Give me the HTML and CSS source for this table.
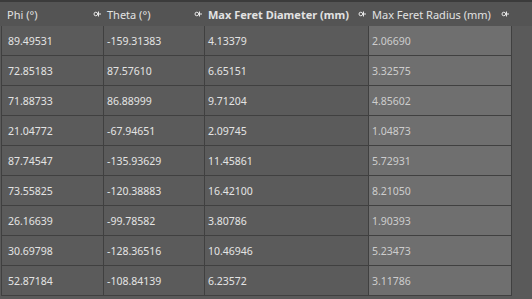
FILE: index.html
```html
<!DOCTYPE html>
<html>
<head>
<meta charset="utf-8">
<link rel="stylesheet" href="styles.css">
</head>
<body>
<div class="grid">
  <div class="topstrip"></div>
  <div class="hcell c1"><span>Phi (°)</span><svg class="pin" viewBox="0 0 8 8" width="8" height="8"><circle cx="2.8" cy="4" r="1.8"/><path d="M4.5 4H5.5M5.5 1.5V6.5M6 4H8"/></svg></div>
  <div class="hcell c2"><span>Theta (°)</span><svg class="pin" viewBox="0 0 8 8" width="8" height="8"><circle cx="2.8" cy="4" r="1.8"/><path d="M4.5 4H5.5M5.5 1.5V6.5M6 4H8"/></svg></div>
  <div class="hcell c3 bold"><span>Max Feret Diameter (mm)</span><svg class="pin" viewBox="0 0 8 8" width="8" height="8"><circle cx="2.8" cy="4" r="1.8"/><path d="M4.5 4H5.5M5.5 1.5V6.5M6 4H8"/></svg></div>
  <div class="hcell c4"><span>Max Feret Radius (mm)</span><svg class="pin" viewBox="0 0 8 8" width="8" height="8"><circle cx="2.8" cy="4" r="1.8"/><path d="M4.5 4H5.5M5.5 1.5V6.5M6 4H8"/></svg></div>
  <div class="hcell c5"></div>

  <div class="cell c1">89.49531</div><div class="cell c2">-159.31383</div><div class="cell c3">4.13379</div><div class="cell c4">2.06690</div><div class="cell c5"></div>
  <div class="cell c1">72.85183</div><div class="cell c2">87.57610</div><div class="cell c3">6.65151</div><div class="cell c4">3.32575</div><div class="cell c5"></div>
  <div class="cell c1">71.88733</div><div class="cell c2">86.88999</div><div class="cell c3">9.71204</div><div class="cell c4">4.85602</div><div class="cell c5"></div>
  <div class="cell c1">21.04772</div><div class="cell c2">-67.94651</div><div class="cell c3">2.09745</div><div class="cell c4">1.04873</div><div class="cell c5"></div>
  <div class="cell c1">87.74547</div><div class="cell c2">-135.93629</div><div class="cell c3">11.45861</div><div class="cell c4">5.72931</div><div class="cell c5"></div>
  <div class="cell c1">73.55825</div><div class="cell c2">-120.38883</div><div class="cell c3">16.42100</div><div class="cell c4">8.21050</div><div class="cell c5"></div>
  <div class="cell c1">26.16639</div><div class="cell c2">-99.78582</div><div class="cell c3">3.80786</div><div class="cell c4">1.90393</div><div class="cell c5"></div>
  <div class="cell c1">30.69798</div><div class="cell c2">-128.36516</div><div class="cell c3">10.46946</div><div class="cell c4">5.23473</div><div class="cell c5"></div>
  <div class="cell c1">52.87184</div><div class="cell c2">-108.84139</div><div class="cell c3">6.23572</div><div class="cell c4">3.11786</div><div class="cell c5"></div>
</div>
</body>
</html>
```
FILE: styles.css
```css
html, body {
  margin: 0;
  padding: 0;
  background: #5a5a5a;
  width: 532px;
  height: 299px;
  overflow: hidden;
}
.grid {
  display: grid;
  grid-template-columns: 104px 101px 164px 143px 20px;
  grid-auto-rows: 30px;
  grid-template-rows: 2px 24px;
  font-family: "Segoe UI", "Noto Sans", sans-serif;
  font-size: 10.5px;
  color: #e4e4e4;
}
.topstrip {
  grid-column: 1 / -1;
  background: #3b3b3b;
}
.hcell {
  background: #545454;
  display: flex;
  align-items: center;
  justify-content: space-between;
  padding: 0 3px 0 3px;
  color: #e2e2e2;
  font-size: 11px;
}
.hcell.c1 { padding-left: 7px; }
.hcell.c5 { padding: 0; }
.bold { font-weight: bold; }
.pin {
  fill: none;
  stroke: #e8e8e8;
  stroke-width: 1;
  flex: none;
}
.cell {
  display: flex;
  align-items: center;
  padding-left: 3px;
  background: #5b5b5b;
  border-bottom: 1px solid #404040;
  border-right: 1px solid #404040;
  box-sizing: border-box;
}
.cell.c1 {
  padding-left: 6px;
  border-left: 1px solid #404040;
  margin-left: 1px;
}
.cell.c4 {
  background: #6f6f6f;
  color: #cdcdcd;
}
.cell.c5 {
  border: none;
  background: #5a5a5a;
}
```
